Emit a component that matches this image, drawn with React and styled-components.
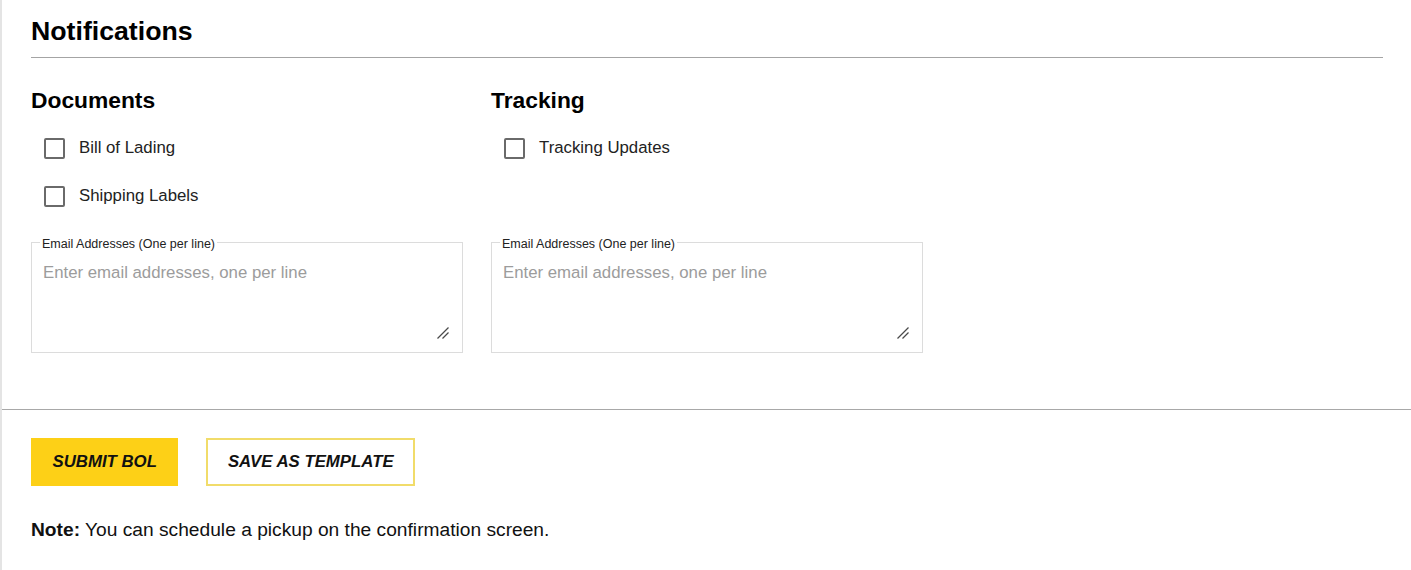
import React from 'react';
import styled, { createGlobalStyle } from 'styled-components';

const GlobalStyle = createGlobalStyle`
  * {
    box-sizing: border-box;
  }
  body {
    margin: 0;
    background: #fff;
    font-family: 'Liberation Sans', Arial, sans-serif;
    color: #111;
  }
`;

const Page = styled.div`
  min-height: 570px;
  border-left: 2px solid #e4e4e4;
`;

const Section = styled.section`
  padding: 15px 28px 56px 29px;
`;

const Title = styled.h1`
  margin: 0 0 28px;
  padding-bottom: 10px;
  font-size: 26.7px;
  line-height: 32px;
  font-weight: 700;
  color: #000;
  border-bottom: 1px solid #a4a4a4;
`;

const Grid = styled.div`
  display: grid;
  grid-template-columns: 432px 432px;
  column-gap: 28px;
`;

const GroupTitle = styled.h2`
  margin: 0 0 10px;
  font-size: 22.8px;
  line-height: 28px;
  font-weight: 700;
  color: #000;
`;

const Checks = styled.div`
  display: flex;
  flex-direction: column;
  margin-bottom: 14px;
`;

const CheckRow = styled.label`
  display: flex;
  align-items: center;
  height: 48px;
  padding-left: 13px;
  gap: 14px;
  font-size: 16.8px;
  color: #222;
  cursor: pointer;
`;

const Box = styled.input.attrs({ type: 'checkbox' })`
  appearance: none;
  margin: 0;
  width: 21px;
  height: 21px;
  border: 2px solid #6a6a6a;
  border-radius: 2px;
  background: #fff;
`;

const Field = styled.fieldset`
  margin: 0;
  padding: 0 11px 11px 8px;
  border: 1px solid #dcdcdc;
  min-width: 0;
`;

const Legend = styled.legend`
  padding: 4px 2px 0;
  font-size: 12.5px;
  line-height: 13px;
  color: #222;
`;

const AreaWrap = styled.div`
  position: relative;
  margin-top: 6px;
`;

const Area = styled.textarea`
  display: block;
  width: 100%;
  height: 84px;
  padding: 6px 3px;
  border: none;
  outline: none;
  font-family: 'Liberation Sans', Arial, sans-serif;
  font-size: 16.8px;
  color: #222;
  resize: none;

  &::placeholder {
    color: #9c9c9c;
  }
`;

const Grip = styled.svg`
  position: absolute;
  right: 2px;
  bottom: 2px;
  width: 12px;
  height: 12px;
  pointer-events: none;
`;

const Footer = styled.div`
  border-top: 1px solid #a8a8a8;
  padding: 28px 29px 0;
`;

const Actions = styled.div`
  display: flex;
  gap: 28px;
`;

const Button = styled.button`
  height: 48px;
  padding: 0 19.5px;
  border: 2px solid ${(p) => (p.$primary ? '#fdd017' : '#f1dc6a')};
  background: ${(p) => (p.$primary ? '#fdd017' : '#fff')};
  font-family: 'Liberation Sans', Arial, sans-serif;
  font-size: 16.8px;
  font-weight: 700;
  font-style: italic;
  text-transform: uppercase;
  color: #111;
  cursor: pointer;
`;

const Note = styled.p`
  margin: 33px 0 0;
  font-size: 19.2px;
  line-height: 22px;
  color: #111;

  strong {
    font-weight: 700;
  }
`;

const groups = [
  { title: 'Documents', items: ['Bill of Lading', 'Shipping Labels'] },
  { title: 'Tracking', items: ['Tracking Updates'] },
];

const ResizeGrip = () => (
  <Grip viewBox="0 0 12 12">
    <path d="M0.5 11.5 L11.5 0.5 M5.5 11.5 L11.5 5.5" stroke="#4a4a4a" strokeWidth="1.3" fill="none" />
  </Grip>
);

const App = () => {
  return (
    <Page>
      <GlobalStyle />
      <Section>
        <Title>Notifications</Title>
        <Grid>
          {groups.map((g) => (
            <GroupTitle key={g.title + '-t'}>{g.title}</GroupTitle>
          ))}
          {groups.map((g) => (
            <Checks key={g.title + '-c'}>
              {g.items.map((item) => (
                <CheckRow key={item}>
                  <Box />
                  {item}
                </CheckRow>
              ))}
            </Checks>
          ))}
          {groups.map((g) => (
            <Field key={g.title + '-f'}>
              <Legend>Email Addresses (One per line)</Legend>
              <AreaWrap>
                <Area placeholder="Enter email addresses, one per line" />
                <ResizeGrip />
              </AreaWrap>
            </Field>
          ))}
        </Grid>
      </Section>
      <Footer>
        <Actions>
          <Button $primary>Submit BOL</Button>
          <Button>Save as Template</Button>
        </Actions>
        <Note>
          <strong>Note:</strong> You can schedule a pickup on the confirmation screen.
        </Note>
      </Footer>
    </Page>
  );
};

export default App;
